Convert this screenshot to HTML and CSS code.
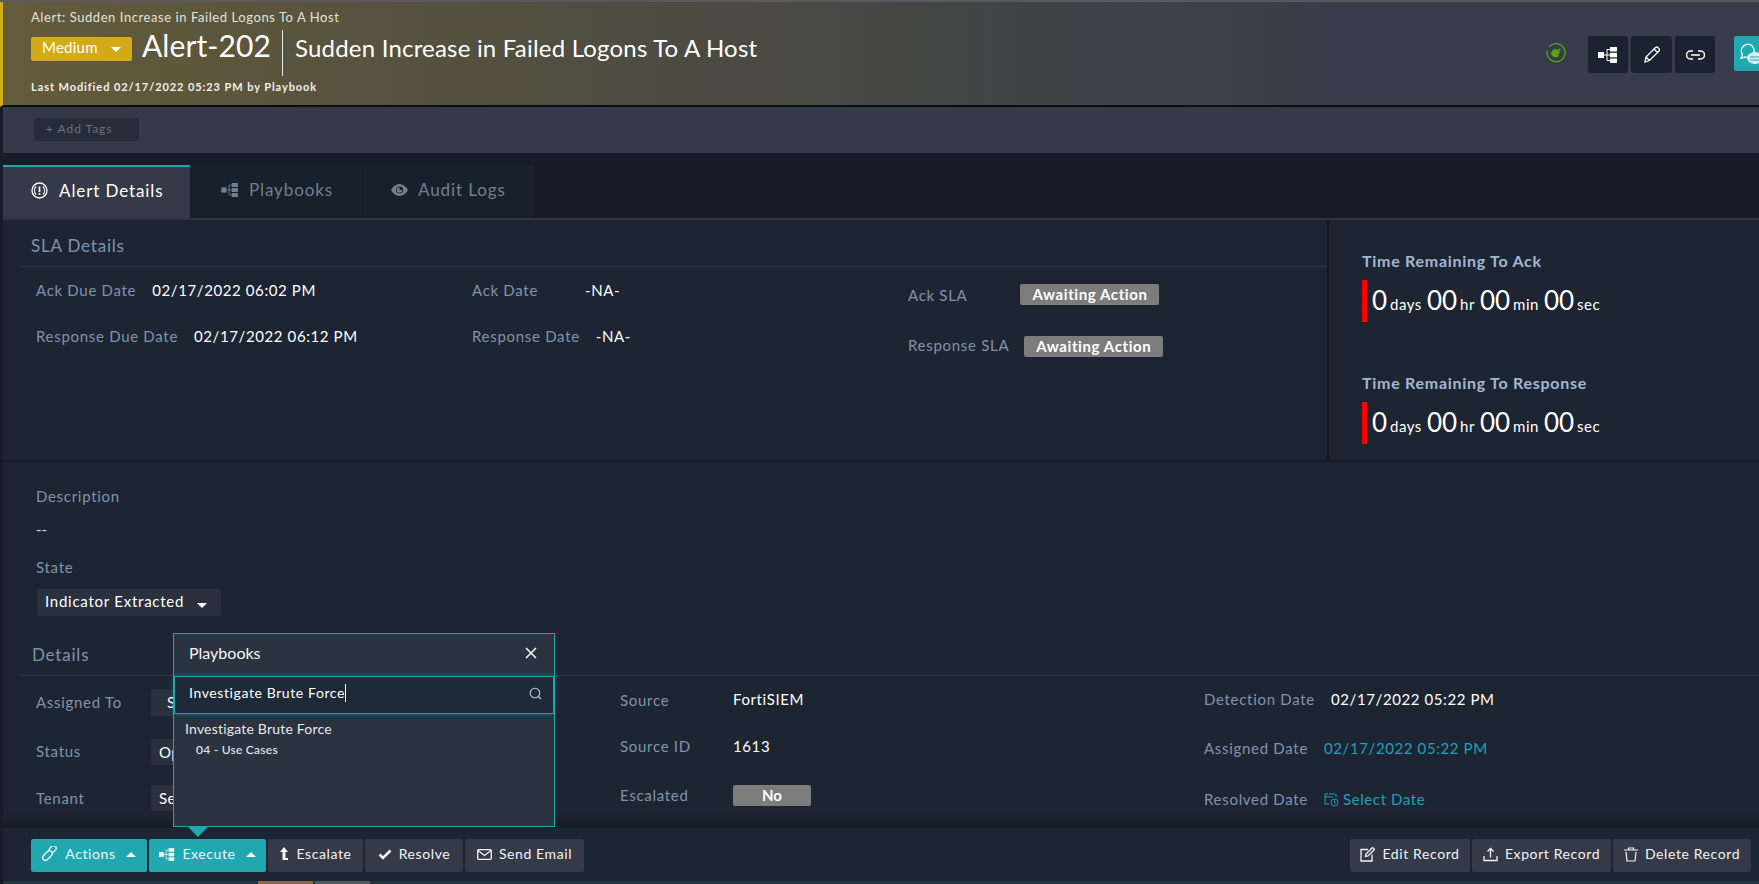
FILE: index.html
```html
<!doctype html>
<html lang="en-us">
<head>
<title>Alert-202</title>
<meta http-equiv="Content-Type" content="text/html; charset=utf-8">
<link rel="stylesheet" href="styles.css">
</head>
<body>

<svg class="defs" width="0" height="0">
  <symbol id="i-tree" viewBox="0 0 20 16">
    <rect x="0" y="5" width="6" height="6" fill="currentColor"/>
    <path d="M6 8h6M9 2.500v11M9 2.500h3M9 13.500h3" stroke="currentColor" fill="none"/>
    <rect x="12" y="0" width="7" height="4.500" fill="currentColor"/>
    <rect x="12" y="5.800" width="7" height="4.500" fill="currentColor"/>
    <rect x="12" y="11.500" width="7" height="4.500" fill="currentColor"/>
  </symbol>
</svg>

<div id="header">
  <div class="head-left">
    <div class="crumb">Alert: Sudden Increase in Failed Logons To A Host</div>
    <div class="head-title">
      <span class="sev">Medium <b class="caret"></b></span>
      <span class="alert-id">Alert-202</span>
      <span class="alert-name">Sudden Increase in Failed Logons To A Host</span>
    </div>
    <div class="modified">Last Modified 02/17/2022 05:23 PM by Playbook</div>
  </div>
  <div class="head-right">
    <svg class="plug" width="20" height="20" viewBox="0 0 20 20">
      <path d="M5 2.200A9 9 0 1 1 1.200 8M1.200 8l-.7 2.500M3 3.800l2-1.600" fill="none" stroke="#5aa512" stroke-width="1.200"/>
      <path d="M5 11a5 5 0 0 1 5-5l1.600 1 2-1.800 1.200 1.200-1.800 2 1 1.200-1.800 1.800.9 1.500a5 5 0 0 1-8.100-1.900z" fill="#5aa512"/>
    </svg>
    <span class="tool"><svg width="20" height="16"><use href="#i-tree"/></svg></span>
    <span class="tool tool-mid">
      <svg width="18" height="18" viewBox="0 0 18 18"><path d="M2 16l1-5L12.500 1.500a1.600 1.600 0 0 1 2.300 0l1.200 1.200a1.600 1.600 0 0 1 0 2.300L6.500 14.500zM3 11l3.500 3.500M11 3l3.500 3.500" fill="none" stroke="currentColor" stroke-width="1.300"/></svg>
    </span>
    <span class="tool">
      <svg width="19" height="10" viewBox="0 0 19 10"><path d="M7 1H4.500a4 4 0 0 0 0 8H7M12 1h2.500a4 4 0 0 1 0 8H12M5 5h9" fill="none" stroke="currentColor" stroke-width="1.500"/></svg>
    </span>
    <span class="chat">
      <svg width="25" height="22" viewBox="0 0 25 22"><path d="M3 15l1.500-3.500A6.500 6.500 0 1 1 8 14z" fill="none" stroke="#fff" stroke-width="1.300"/><ellipse cx="17" cy="15" rx="8" ry="6" fill="#d8eef0"/><path d="M12 14h10M12 17h10" stroke="#20a7b0"/></svg>
    </span>
  </div>
</div>

<div id="main">
  <div class="tagbar"><span class="addtags">+ Add Tags</span></div>

  <div class="tabs">
    <div class="tab on">
      <svg width="17" height="17" viewBox="0 0 17 17"><circle cx="8.500" cy="8.500" r="7.500" fill="none" stroke="currentColor" stroke-width="1.300"/><path d="M8.500 4.500v5.500M8.500 11v1.800" fill="none" stroke="currentColor" stroke-width="1.700"/><path d="M5 4.500a6 6 0 0 0 0 8M12 4.500a6 6 0 0 1 0 8" fill="none" stroke="currentColor" stroke-width="1.200"/></svg>
      Alert Details
    </div>
    <div class="tab">
      <svg width="18" height="14"><use href="#i-tree"/></svg>
      Playbooks
    </div>
    <div class="tab">
      <svg width="17" height="12" viewBox="0 0 17 12"><path d="M0 6c2-3.600 5-6 8.500-6S15 2.400 17 6c-2 3.600-5 6-8.500 6S2 9.600 0 6z" fill="currentColor"/><circle cx="8.500" cy="6" r="3.600" fill="#18202c"/><path d="M8.500 3.200a2.800 2.800 0 1 0 2.800 2.800H8.500z" fill="currentColor"/></svg>
      Audit Logs
    </div>
  </div>

  <div class="sla">
    <div class="sla-left">
      <h3 class="sec-title">SLA Details</h3>
      <div class="sla-grid">
        <div class="fld"><label>Ack Due Date</label><span class="val">02/17/2022 06:02 PM</span></div>
        <div class="fld"><label class="wide">Ack Date</label><span class="val">-NA-</span></div>
        <div class="fld fld-badge"><label class="wider">Ack SLA</label><span class="badge">Awaiting Action</span></div>
        <div class="fld"><label>Response Due Date</label><span class="val">02/17/2022 06:12 PM</span></div>
        <div class="fld"><label>Response Date</label><span class="val">-NA-</span></div>
        <div class="fld fld-badge low"><label class="up3">Response SLA</label><span class="badge">Awaiting Action</span></div>
      </div>
    </div>
    <div class="sla-right">
      <div class="timer">
        <h4>Time Remaining To Ack</h4>
        <div class="count"><b>0</b><i>days</i><b>00</b><i>hr</i><b>00</b><i>min</i><b>00</b><i>sec</i></div>
      </div>
      <div class="timer">
        <h4>Time Remaining To Response</h4>
        <div class="count"><b>0</b><i>days</i><b>00</b><i>hr</i><b>00</b><i>min</i><b>00</b><i>sec</i></div>
      </div>
    </div>
  </div>

  <div class="info">
    <label>Description</label>
    <div class="desc">--</div>
    <label>State</label>
    <div class="state">Indicator Extracted <b class="caret"></b></div>
    <h3 class="sec-title sec-details">Details</h3>
    <div class="det-grid">
      <div class="fld"><label class="lw down3">Assigned To</label><span class="pick pick-far">Select</span></div>
      <div class="fld"><label class="lw down1">Source</label><span class="val">FortiSIEM</span></div>
      <div class="fld"><label>Detection Date</label><span class="val">02/17/2022 05:22 PM</span></div>
      <div class="fld"><label class="lw down4">Status</label><span class="pick pick-2">Open</span></div>
      <div class="fld"><label class="lw up1">Source ID</label><span class="val up1">1613</span></div>
      <div class="fld"><label class="down1">Assigned Date</label><span class="val link down1">02/17/2022 05:22 PM</span></div>
      <div class="fld"><label class="lw down3">Tenant</label><span class="pick pick-3">Select</span></div>
      <div class="fld"><label class="lw">Escalated</label><span class="toggle">No</span></div>
      <div class="fld"><label class="down4">Resolved Date</label>
        <span class="val link down4">
          <svg width="15" height="15" viewBox="0 0 15 15"><path d="M5 2h4M2.500 2H1v10h4M3 1v2M10 1v2M12 2v3M1 5h8" fill="none" stroke="currentColor"/><circle cx="10.500" cy="10.500" r="3.500" fill="none" stroke="currentColor"/><path d="M10.500 8.500v2l1.500 1" fill="none" stroke="currentColor"/></svg>
          Select Date
        </span>
      </div>
    </div>
  </div>

  <div class="actions">
    <div class="btns">
      <span class="btn teal w-act">
        <svg width="16" height="16" viewBox="0 0 16 16"><path d="M1.500 10.500l4-4a2.800 2.800 0 0 1 4 4l-4 4a2.800 2.800 0 0 1-4-4zM6.500 5.500l2.500-3.500a2.800 2.800 0 0 1 5 2.500l-3 3" fill="none" stroke="currentColor" stroke-width="1.300" transform="translate(0 -1)"/></svg>
        Actions <b class="caret up"></b>
      </span>
      <span class="btn teal w-exe"><svg width="16" height="13"><use href="#i-tree"/></svg> Execute <b class="caret up"></b></span>
      <span class="btn w-esc">
        <svg width="10" height="14" viewBox="0 0 10 14"><path d="M5 0l4 5H6.500v6H9v2H3.500V5H1z" fill="currentColor"/></svg>
        Escalate
      </span>
      <span class="btn w-res">
        <svg width="14" height="11" viewBox="0 0 14 11"><path d="M1.500 5.500l3.500 3.500 7.500-7.500" fill="none" stroke="currentColor" stroke-width="2.600"/></svg>
        Resolve
      </span>
      <span class="btn w-mail">
        <svg width="15" height="11" viewBox="0 0 15 11"><rect x=".7" y=".7" width="13.600" height="9.600" rx="1" fill="none" stroke="currentColor" stroke-width="1.300"/><path d="M1 1.500l6.500 5 6.500-5" fill="none" stroke="currentColor" stroke-width="1.300"/></svg>
        Send Email
      </span>
    </div>
    <div class="btns">
      <span class="btn w-edit">
        <svg width="15" height="15" viewBox="0 0 15 15"><path d="M8 2.500H1v11.500h11V7.500M6 7l6.500-6.500 2 2L8 9l-2.500.5z" fill="none" stroke="currentColor" stroke-width="1.300"/></svg>
        Edit Record
      </span>
      <span class="btn w-exp">
        <svg width="15" height="15" viewBox="0 0 15 15"><path d="M1 9v4.500h13V9M7.500 10.500V2M4.500 4.500l3-3 3 3" fill="none" stroke="currentColor" stroke-width="1.300"/></svg>
        Export Record
      </span>
      <span class="btn w-del">
        <svg width="14" height="15" viewBox="0 0 14 15"><path d="M0 3h14M4.500 3V1h5v2M2 5l1 9h8l1-9" fill="none" stroke="currentColor" stroke-width="1.200"/></svg>
        Delete Record
      </span>
    </div>
  </div>

  <div class="strip"><span class="s1"></span><span class="s2"></span></div>
</div>

<div id="pop">
  <div class="pop-head">Playbooks
    <svg width="12" height="12" viewBox="0 0 12 12"><path d="M1 1l10 10M11 1L1 11" stroke="#fff" stroke-width="1.500"/></svg>
  </div>
  <div class="pop-search"><span class="typed">Investigate Brute Force</span>
    <svg width="13" height="13" viewBox="0 0 13 13"><circle cx="6" cy="6" r="4.800" fill="none" stroke="#c3cad6" stroke-width="1.100"/><path d="M9.500 9.500l2.500 2.500" stroke="#c3cad6" stroke-width="1.100"/></svg>
  </div>
  <div class="pop-name">Investigate Brute Force</div>
  <div class="pop-sub">04 - Use Cases</div>
  <span class="pop-arrow"></span>
</div>

</body>
</html>
```

FILE: styles.css
```css
* {
  box-sizing: border-box;
}
html, body {
  height: 100%;
}
body {
  margin: 0;
  height: 884px;
  overflow: hidden;
  position: relative;
  background: #161d28;
  color: #fff;
  font: 15px/20px Lato, "Open Sans", sans-serif;
  border-top: solid 2px #5a5a5e;
}
svg {
  flex: none;
}
.defs {
  position: absolute;
}
label {
  color: #8292ad;
  font-size: 15px;
  letter-spacing: .7px;
  white-space: nowrap;
}

/* header */
#header {
  height: 105px;
  display: flex;
  justify-content: space-between;
  padding: 0 0 0 28px;
  border-left: solid 3px #d3ab19;
  border-bottom: solid 2px #0a0d12;
  background: linear-gradient(90deg, #635b3a, #363c4a 78%);
}
.crumb {
  margin-top: 6px;
  font-size: 13px;
  line-height: 18px;
  color: #e2e2dc;
  letter-spacing: .57px;
}
.head-title {
  display: flex;
  align-items: flex-start;
  height: 46px;
  margin-top: 4px;
}
.sev {
  width: 101px;
  height: 24px;
  margin-top: 7px;
  padding-left: 11px;
  background: #d3ab19;
  border-radius: 2px;
  font-size: 15px;
  line-height: 20px;
  letter-spacing: .25px;
}
.sev .caret {
  margin-left: 9px;
}
.caret {
  display: inline-block;
  width: 0;
  height: 0;
  margin-left: 6px;
  vertical-align: 1px;
  border-left: 5px solid transparent;
  border-right: 5px solid transparent;
  border-top: 5px solid #fff;
}
.caret.up {
  border-top: none;
  border-bottom: 5px solid #fff;
  vertical-align: 2px;
}
.alert-id {
  margin-left: 10px;
  width: 141px;
  height: 46px;
  border-right: solid 1px #dfe6ee;
  font-size: 30px;
  line-height: 31px;
  letter-spacing: .1px;
}
.alert-name {
  margin-left: 12px;
  font-size: 24px;
  line-height: 35px;
  letter-spacing: .2px;
}
.modified {
  margin-top: 2px;
  font-size: 11px;
  font-weight: 700;
  line-height: 18px;
  letter-spacing: .92px;
  color: #f1f1ec;
}
.head-right {
  display: flex;
  align-items: flex-start;
  padding-top: 34px;
}
.plug {
  margin: 7px 22px 0 0;
}
.tool {
  width: 40px;
  height: 37px;
  display: flex;
  align-items: center;
  justify-content: center;
  margin-right: 3px;
  background: #1c2330;
  border-radius: 3px;
}
.tool-mid {
  width: 41px;
}
.chat {
  width: 25px;
  height: 35px;
  margin-left: 16px;
  padding: 7px 0 0 4px;
  background: #20a7b0;
  border-radius: 2px 0 0 2px;
  overflow: hidden;
}

/* main column */
#main {
  margin-left: 3px;
  height: 777px;
  display: flex;
  flex-direction: column;
}
.tagbar {
  height: 46px;
  flex: none;
  padding: 11px 0 0 31px;
  background: #343a48;
}
.addtags {
  display: block;
  width: 105px;
  height: 23px;
  padding-left: 12px;
  background: #262c38;
  border-radius: 2px;
  color: #687183;
  font-size: 12px;
  line-height: 21px;
  letter-spacing: .95px;
}
.tabs {
  display: flex;
  flex: none;
  height: 67px;
  padding-top: 12px;
  border-bottom: solid 2px #2d3442;
}
.tab {
  width: 171px;
  margin-right: 1px;
  height: 53px;
  display: flex;
  align-items: center;
  gap: 10px;
  padding: 0 0 4px 30px;
  background: #18202c;
  color: #737f93;
  font-size: 17px;
  letter-spacing: .9px;
}
.tab + .tab + .tab {
  padding-left: 28px;
}
.tab.on {
  width: 187px;
  gap: 11px;
  padding-left: 28px;
  background: #343a48;
  border-top: solid 2px #20a7b0;
  color: #fff;
}

/* sla */
.sla {
  display: flex;
  flex: none;
  height: 242px;
  background: #1e2532;
  border-bottom: solid 2px #161d28;
}
.sla-left {
  width: 1324px;
  padding-left: 17px;
}
.sec-title {
  margin: 0;
  height: 47px;
  padding: 16px 0 0 11px;
  color: #8292ad;
  font-size: 17px;
  font-weight: 400;
  line-height: 20px;
  letter-spacing: .8px;
  border-bottom: solid 1px #303846;
}
.sla-grid {
  display: grid;
  grid-template-columns: 436px 436px 1fr;
  grid-auto-rows: 46px;
  padding: 13px 0 0 16px;
}
.fld {
  display: flex;
  align-items: flex-start;
  gap: 16px;
}
.fld label, .val {
  line-height: 20px;
}
.val {
  font-size: 15px;
  letter-spacing: .6px;
  white-space: nowrap;
}
.wide {
  margin-right: 31px;
}
.wider {
  margin-right: 38px;
}
.fld-badge {
  align-items: center;
  align-self: start;
  gap: 15px;
  padding-top: 4px;
}
.fld-badge.low {
  padding-top: 10px;
}
.badge {
  width: 139px;
  height: 21px;
  background: #7c7c7c;
  border-radius: 2px;
  text-align: center;
  font-size: 15px;
  font-weight: 700;
  line-height: 21px;
  letter-spacing: .6px;
}
.sla-right {
  flex: 1;
  padding-left: 33px;
  border-left: solid 2px #11161f;
}
.timer {
  height: 122px;
  padding-top: 31px;
}
.timer + .timer {
  height: 118px;
}
.timer h4 {
  margin: 0 0 9px;
  color: #a5b7d4;
  font-size: 16px;
  font-weight: 700;
  line-height: 20px;
  letter-spacing: .72px;
}
.count {
  height: 42px;
  padding-left: 5px;
  border-left: solid 5px #f00;
  display: flex;
  align-items: baseline;
  line-height: 40px;
}
.count b {
  font-size: 26px;
  font-weight: 400;
  margin-left: 5px;
}
.count b:first-child {
  margin-left: 0;
}
.count i {
  font-style: normal;
  font-size: 15px;
  margin-left: 3px;
  letter-spacing: .5px;
}

/* description + details */
.info {
  flex: 1;
  min-height: 0;
  position: relative;
  padding: 24px 0 0 17px;
  background: linear-gradient(180deg, #1e2532 96%, #171d27);
}
.info > label {
  display: block;
  margin-left: 16px;
}
.desc {
  margin: 13px 0 18px 16px;
  line-height: 20px;
  color: #d5dae2;
}
.state {
  width: 184px;
  height: 27px;
  margin: 12px 0 27px 17px;
  padding-left: 8px;
  background: #2a303d;
  border-radius: 2px;
  line-height: 25px;
  letter-spacing: .75px;
}
.state .caret {
  margin-left: 8px;
  vertical-align: -1px;
}
.sec-details {
  height: 33px;
  padding: 2px 0 0 12px;
}
.det-grid {
  display: grid;
  grid-template-columns: 584px 584px 1fr;
  grid-auto-rows: 48px;
  padding: 13px 0 0 16px;
}
.lw {
  width: 99px;
}
.down1 { margin-top: 1px; }
.down3 { margin-top: 3px; }
.down4 { margin-top: 4px; }
.up1 { margin-top: -1px; }
.up3 { margin-top: -3px; }
.pick {
  width: 300px;
  height: 27px;
  padding-left: 8px;
  background: #2a303d;
  border-radius: 2px;
  line-height: 26px;
  letter-spacing: .3px;
}
.pick-far {
  padding-left: 16px;
}
.pick-2 {
  margin-top: 2px;
  height: 26px;
}
.pick-3 {
  height: 26px;
}
.det-grid .fld:nth-child(3n+2) .lw {
  width: 97px;
}
.link {
  color: #20a0b8;
  display: flex;
  align-items: center;
  gap: 4px;
}
.toggle {
  width: 78px;
  height: 21px;
  background: #7c7c7c;
  border-radius: 2px;
  text-align: center;
  font-weight: 700;
  line-height: 21px;
}

/* bottom buttons */
.actions {
  height: 54px;
  flex: none;
  display: flex;
  justify-content: space-between;
  padding: 11px 8px 0 28px;
  background: #1e2532;
  border-top: solid 1px #141a23;
}
.btns {
  display: flex;
  gap: 2px;
}
.btn {
  height: 33px;
  display: flex;
  align-items: center;
  justify-content: center;
  gap: 7px;
  padding-bottom: 3px;
  background: #343a48;
  border-radius: 2px;
  color: #f2f4f6;
  font-size: 14px;
  letter-spacing: .6px;
  white-space: nowrap;
}
.btn.teal {
  background: #20a7b0;
}
.btn .caret {
  margin-left: 3px;
}
.w-act { width: 116px; }
.w-exe { width: 117px; }
.w-esc { width: 95px; }
.w-res { width: 98px; }
.w-mail { width: 119px; }
.w-edit { width: 120px; }
.w-exp { width: 139px; }
.w-del { width: 138px; }
.strip {
  height: 3px;
  flex: none;
  display: flex;
  gap: 2px;
  padding-left: 255px;
  background: #23343c;
}
.s1 {
  width: 55px;
  background: #8a6a4a;
}
.s2 {
  width: 55px;
  background: #4f5a62;
}

/* playbooks popup */
#pop {
  position: absolute;
  left: 173px;
  top: 631px;
  width: 382px;
  height: 194px;
  background: #2b3240;
  border: solid 1px #20a7b0;
}
.pop-head {
  height: 42px;
  display: flex;
  align-items: center;
  justify-content: space-between;
  padding: 0 17px 4px 15px;
  font-size: 16px;
  color: #f4f6f8;
}
.pop-search {
  height: 38px;
  display: flex;
  align-items: center;
  justify-content: space-between;
  padding: 0 11px 4px 14px;
  background: #1e2a38;
  border: solid 1px #20a7b0;
  box-shadow: 0 0 6px rgba(32, 167, 176, .4);
  font-size: 14px;
  letter-spacing: .6px;
}
.typed {
  border-right: solid 1px #fff;
  line-height: 18px;
}
.pop-name {
  margin: 5px 0 0 11px;
  font-size: 14px;
  line-height: 20px;
  letter-spacing: .2px;
  color: #e6e9ee;
}
.pop-sub {
  margin: 2px 0 0 22px;
  font-size: 12px;
  font-weight: 500;
  line-height: 18px;
  letter-spacing: .25px;
  color: #e6e9ee;
}
.pop-arrow {
  position: absolute;
  left: 13px;
  top: 192px;
  width: 0;
  height: 0;
  border-left: 11px solid transparent;
  border-right: 11px solid transparent;
  border-top: 11px solid #20a7b0;
}
```
